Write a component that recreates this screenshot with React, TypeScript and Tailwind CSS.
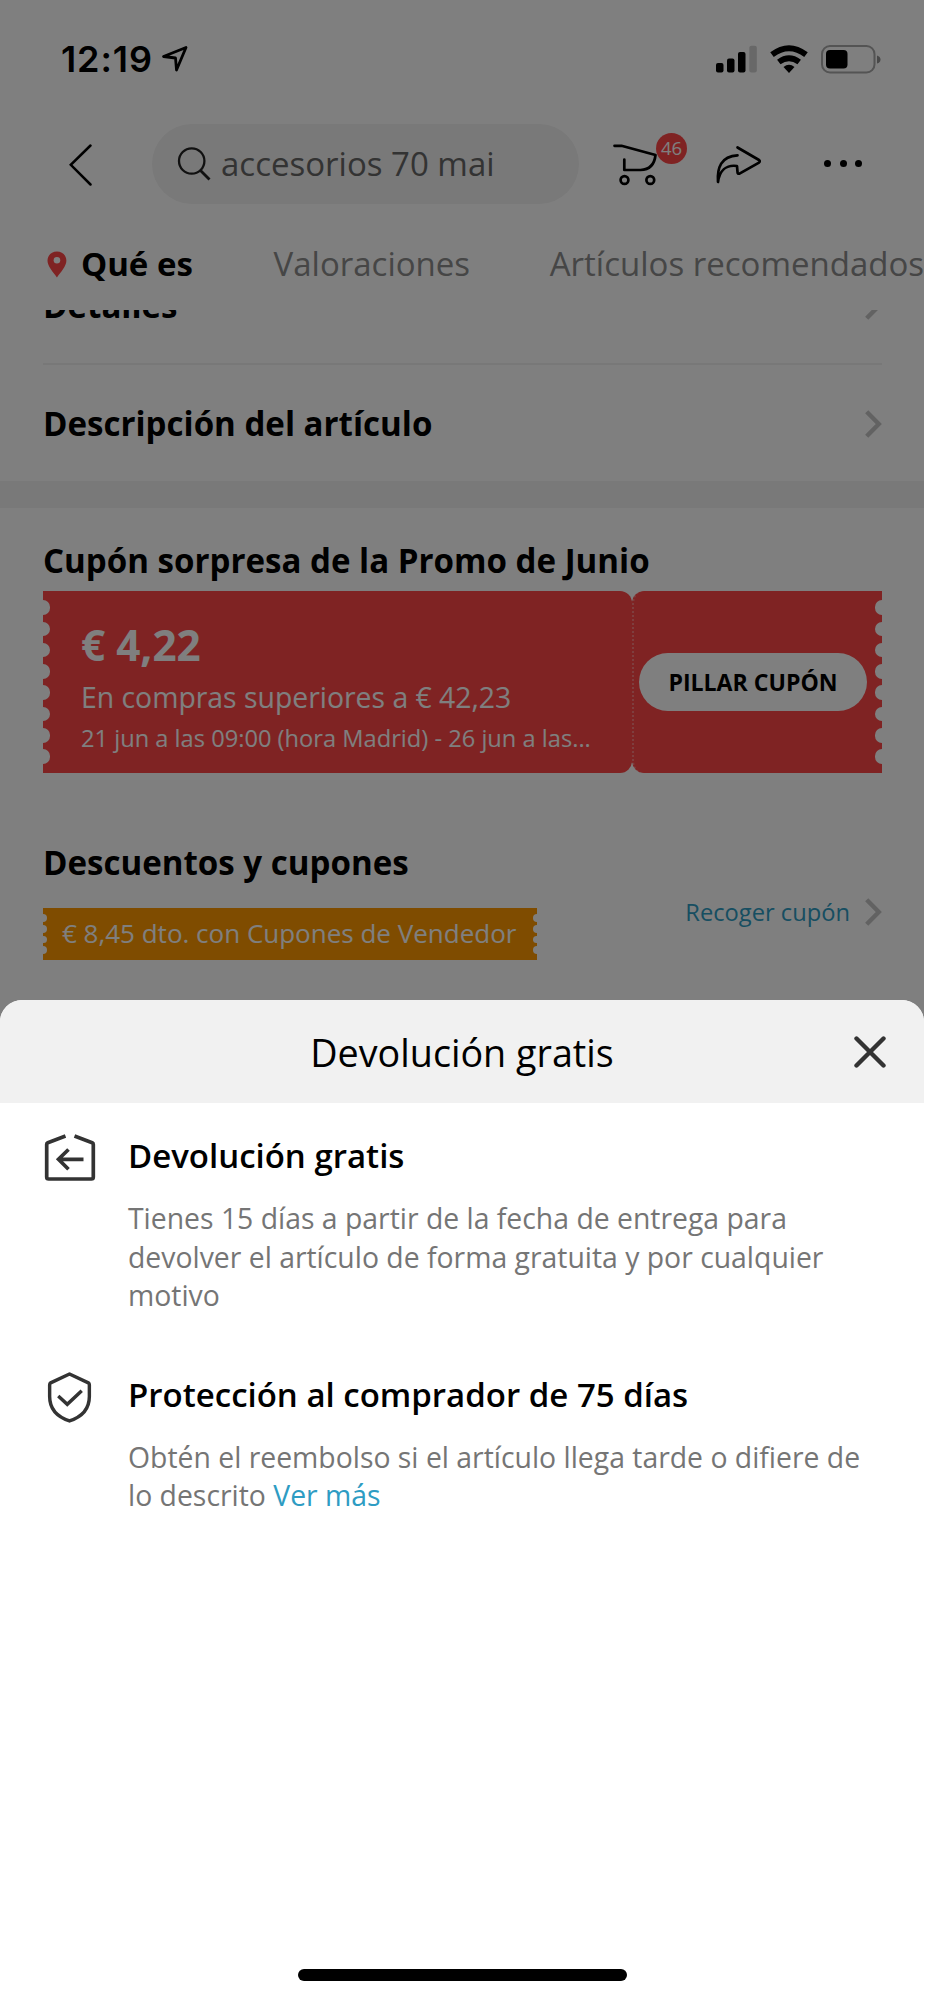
import type { ReactNode } from 'react';

interface TicketEdgeProps {
  count: number;
  side: 'left' | 'right';
  small?: boolean;
}

interface BenefitProps {
  icon: ReactNode;
  title: string;
  children: ReactNode;
}

const LocationArrow = () => (
  <svg className="ml-2 h-7 w-7" viewBox="0 0 28 28" fill="none" stroke="currentColor" strokeWidth="2.8" strokeLinejoin="round">
    <path d="M2.5 11.5 L25 2.5 L15.5 25 L14.5 13 Z" />
  </svg>
);

const StatusIcons = () => (
  <div className="flex items-center">
    <svg className="h-7 w-[41px]" viewBox="0 0 41 28">
      <rect x="0" y="18" width="7.5" height="9.5" rx="2" />
      <rect x="11" y="13.5" width="7.5" height="14" rx="2" />
      <rect x="22" y="7" width="7.5" height="20.5" rx="2" />
      <rect x="33.3" y=".8" width="7.5" height="26.7" rx="2" fill="#d0d0d0" />
    </svg>
    <svg className="ml-[13px] h-7 w-[38px]" viewBox="0 0 38 28" fill="none" stroke="currentColor" strokeWidth="5.8">
      <path d="M2 9.6 Q19 -3.3 36 9.6" />
      <path d="M8.8 17 Q19 9.5 29.2 17" />
      <path d="M13.5 22 Q19 17.5 24.5 22 L19 28 Z" fill="currentColor" stroke="none" />
    </svg>
    <svg className="ml-[13px] h-[29px] w-[60px]" viewBox="0 0 60 29">
      <rect x="1" y="1" width="52.5" height="26.5" rx="8" fill="none" stroke="#a8a8a8" strokeWidth="2" />
      <rect x="5" y="5" width="21.5" height="18.5" rx="4" />
      <path d="M56 10.5 Q59.5 11.5 59.5 14.5 Q59.5 17.5 56 18.5 Z" fill="#909090" />
    </svg>
  </div>
);

const BackIcon = () => (
  <svg className="mt-0.5 h-[42px] w-6" viewBox="0 0 24 42" fill="none" stroke="currentColor" strokeWidth="2.5" strokeLinecap="round">
    <path d="M21.5 1.5 L1.8 20.8 L21.5 40.5" />
  </svg>
);

const SearchIcon = () => (
  <svg className="h-[34px] w-[34px]" viewBox="0 0 34 34" fill="none" stroke="#222" strokeWidth="2.3">
    <circle cx="14.7" cy="14" r="12.7" />
    <path d="M23 23 L32.5 32.5" strokeWidth="2.8" />
  </svg>
);

const CartIcon = () => (
  <svg className="h-[44px] w-[44px]" viewBox="0 0 44 44" fill="none" stroke="currentColor" strokeWidth="2.7" strokeLinecap="round" strokeLinejoin="round">
    <path d="M1.5 2.8 H8.5 L42.5 12 Q41 26.5 27.5 27 H11.3 V16.5" />
    <circle cx="11.5" cy="37" r="3.9" />
    <circle cx="37.3" cy="37" r="3.9" />
  </svg>
);

const ShareIcon = () => (
  <svg className="mt-[3px] h-[40px] w-[48px]" viewBox="0 0 48 40" fill="none" stroke="currentColor" strokeWidth="2.7" strokeLinecap="round" strokeLinejoin="round">
    <path d="M22.5 2.5 L44 15 Q45.5 16.3 44 17.6 L24.5 28.7 Q22.3 29 22.5 27 L22 21 C11 19.5 4.5 26 3 37 C2 23 6 11 22.5 10.3" />
  </svg>
);

const ChevronIcon = () => (
  <svg className="h-7 w-[17px]" viewBox="0 0 17 28" fill="none" stroke="#c4c4c4" strokeWidth="4.4">
    <path d="M1.7 1.7 L13.8 14 L1.7 26.3" />
  </svg>
);

const PinIcon = () => (
  <svg className="h-[27px] w-5" viewBox="0 0 20 27">
    <path d="M10 .5 C4.5 .5 .5 4.5 .5 9.7 C.5 15 6 21 10 26.5 C14 21 19.5 15 19.5 9.7 C19.5 4.5 15.5 .5 10 .5 Z" fill="#ff4747" />
    <circle cx="10" cy="9.3" r="3.3" fill="#fff" />
  </svg>
);

const ReturnIcon = () => (
  <svg className="-mt-px h-[48px] w-[52px]" viewBox="0 0 52 48" fill="none" stroke="#333" strokeWidth="3.7">
    <path d="M21.5 2 L3.8 8.7 Q2.7 9.2 2.7 10.5 V43 Q2.7 45 4.7 45 H47.3 Q49.3 45 49.3 43 V10.5 Q49.3 9.2 48.2 8.7 L30.5 2" strokeLinejoin="round" />
    <path d="M24.5 15.5 L14.5 25.3 L24.5 35.2 M14.5 25.3 H39.5" />
  </svg>
);

const ShieldIcon = () => (
  <svg className="-mt-0.5 h-[51px] w-[45px]" viewBox="0 0 46 52" fill="none" stroke="#333" strokeWidth="3.5" strokeLinejoin="round">
    <path d="M23 2 L42.3 11 Q43.3 11.6 43.3 13 V25 C43.3 38 35 46 23 50 C11 46 2.7 38 2.7 25 V13 Q2.7 11.6 3.7 11 Z" />
    <path d="M11.5 24.5 L20.7 33 L35.5 19" strokeLinejoin="miter" />
  </svg>
);

const TicketEdge = ({ count, side, small }: TicketEdgeProps) => (
  <div
    className={`absolute inset-y-0 flex flex-col justify-center ${small ? 'gap-[3px]' : 'gap-[6.7px]'} ${
      side === 'left' ? (small ? '-left-1' : '-left-[7.3px]') : small ? '-right-1' : '-right-[7.3px]'
    }`}
  >
    {Array.from({ length: count }, (_, i) => (
      <span key={i} className={`rounded-full bg-white ${small ? 'size-[7.6px]' : 'size-[14.6px]'}`} />
    ))}
  </div>
);

const Benefit = ({ icon, title, children }: BenefitProps) => (
  <section className="flex">
    <div className="flex w-[85px] shrink-0 items-start justify-center pr-[32px]">{icon}</div>
    <div>
      <h3 className="text-[33px] leading-[42px] font-semibold whitespace-nowrap text-black">{title}</h3>
      <p className="mt-[22px] text-[28.37px] leading-[38.6px] whitespace-nowrap text-[#757575]">{children}</p>
    </div>
  </section>
);

const App = () => {
  return (
    <div className="h-[2000px] w-[925px] overflow-hidden bg-white font-['Open_Sans',sans-serif]">
      <div className="relative h-full w-[924px] overflow-hidden text-black">
        {/* Status bar */}
        <div className="flex h-[118px] items-center justify-between pr-[43px] pl-[61px]">
          <div className="flex items-center">
            <span className="font-['Inter',sans-serif] text-[36px] leading-none font-semibold tracking-[0.9px]">12:19</span>
            <LocationArrow />
          </div>
          <StatusIcons />
        </div>

        {/* Navigation */}
        <header className="flex h-[91px] items-center pl-[69px]">
          <BackIcon />
          <div className="ml-[59px] flex h-[80px] w-[427px] items-center rounded-full bg-[#f2f2f2] pl-[25px]">
            <SearchIcon />
            <span className="ml-[10px] text-[33px] leading-none text-[#666]">accesorios 70 mai</span>
          </div>
          <div className="relative mt-[2px] ml-[34px]">
            <CartIcon />
            <span className="absolute -top-[10px] left-[43px] flex size-[31px] items-center justify-center rounded-full bg-[#ff4747] text-[18.5px] leading-none text-white">
              46
            </span>
          </div>
          <div className="ml-[58px]">
            <ShareIcon />
          </div>
          <div className="ml-[61px] flex gap-[8.5px]">
            <span className="size-[7px] rounded-full bg-black" />
            <span className="size-[7px] rounded-full bg-black" />
            <span className="size-[7px] rounded-full bg-black" />
          </div>
        </header>

        {/* Section tabs */}
        <nav className="flex h-[101px] items-center pt-[9px] pl-[47px] text-[33px] leading-[44px] whitespace-nowrap text-[#8c8c8c]">
          <PinIcon />
          <span className="ml-[14px] w-[194px] font-bold text-black">Qué es</span>
          <span className="w-[278px]">Valoraciones</span>
          <span>Artículos recomendados</span>
        </nav>

        <main className="h-[690px] overflow-hidden">
          <div className="-mt-[62px] pr-[42px] pl-[43px] text-[33.1px] leading-[44px] font-bold">
            <div className="flex h-[117px] items-center justify-between border-b-2 border-[#f0f0f0] pt-px">
              Detalles
              <ChevronIcon />
            </div>
            <div className="flex h-[116px] items-center justify-between pt-px">
              Descripción del artículo
              <ChevronIcon />
            </div>
          </div>
          <div className="h-[27px] bg-[#f2f2f2]" />

          <div className="pt-[31px] pr-[42px] pl-[43px]">
            <h2 className="text-[33.1px] leading-[44px] font-bold">Cupón sorpresa de la Promo de Junio</h2>
            <div className="relative mt-2 flex h-[182px] overflow-hidden">
              <div className="w-[589px] rounded-r-xl bg-[#ff4747] pt-[31px] pl-[38px] whitespace-nowrap text-white">
                <p className="text-[42.3px] leading-[46px] font-bold">€ 4,22</p>
                <p className="mt-[7px] text-[28.37px] leading-[44px]">En compras superiores a € 42,23</p>
                <p className="text-[23.67px] leading-[38px]">21 jun a las 09:00 (hora Madrid) - 26 jun a las...</p>
              </div>
              <div className="flex flex-1 items-center rounded-l-xl border-l-2 border-dotted border-[#ff7d7d] bg-[#ff4747] pl-[5px]">
                <button className="h-[58px] w-[228px] rounded-full bg-white pt-0.5 text-[23.1px] leading-none font-bold">PILLAR CUPÓN</button>
              </div>
              <TicketEdge count={8} side="left" />
              <TicketEdge count={8} side="right" />
            </div>

            <h2 className="mt-[68px] text-[33.1px] leading-[44px] font-bold">Descuentos y cupones</h2>
            <div className="mt-[23px] flex items-start justify-between">
              <div className="relative flex h-[52px] w-[494px] items-center overflow-hidden bg-[#ff9900] pb-0.5 pl-[19px] text-[26px] whitespace-nowrap text-white">
                € 8,45 dto. con Cupones de Vendedor
                <TicketEdge count={4} side="left" small />
                <TicketEdge count={4} side="right" small />
              </div>
              <div className="-mt-3 flex items-center gap-[15px] text-[23.7px] leading-[32px] text-[#2e9cc3]">
                Recoger cupón
                <ChevronIcon />
              </div>
            </div>
          </div>
        </main>

        <div className="absolute inset-0 bg-black/50" />

        {/* Bottom sheet */}
        <div className="absolute inset-x-0 bottom-0 flex h-[1000px] flex-col overflow-hidden rounded-t-[22px] bg-white">
          <div className="grid h-[103px] shrink-0 grid-cols-[1fr_auto_1fr] items-center bg-[#f1f1f1] px-[38px]">
            <h1 className="col-start-2 pt-0.5 text-[37.7px] leading-none">Devolución gratis</h1>
            <svg className="h-8 w-8 justify-self-end" viewBox="0 0 32 32" stroke="#333" strokeWidth="4.4" strokeLinecap="round">
              <path d="M2.5 2.5 L29.5 29.5 M29.5 2.5 L2.5 29.5" />
            </svg>
          </div>
          <div className="flex flex-col gap-[59px] pt-[32px] pl-[43px]">
            <Benefit icon={<ReturnIcon />} title="Devolución gratis">
              Tienes 15 días a partir de la fecha de entrega para
              <br />
              devolver el artículo de forma gratuita y por cualquier
              <br />
              motivo
            </Benefit>
            <Benefit icon={<ShieldIcon />} title="Protección al comprador de 75 días">
              Obtén el reembolso si el artículo llega tarde o difiere de
              <br />
              lo descrito <a className="text-[#2e9cc3]">Ver más</a>
            </Benefit>
          </div>
          <div className="mx-auto mt-auto mb-[19px] h-3 w-[329px] rounded-full bg-black" />
        </div>
      </div>
    </div>
  );
};

export default App;
